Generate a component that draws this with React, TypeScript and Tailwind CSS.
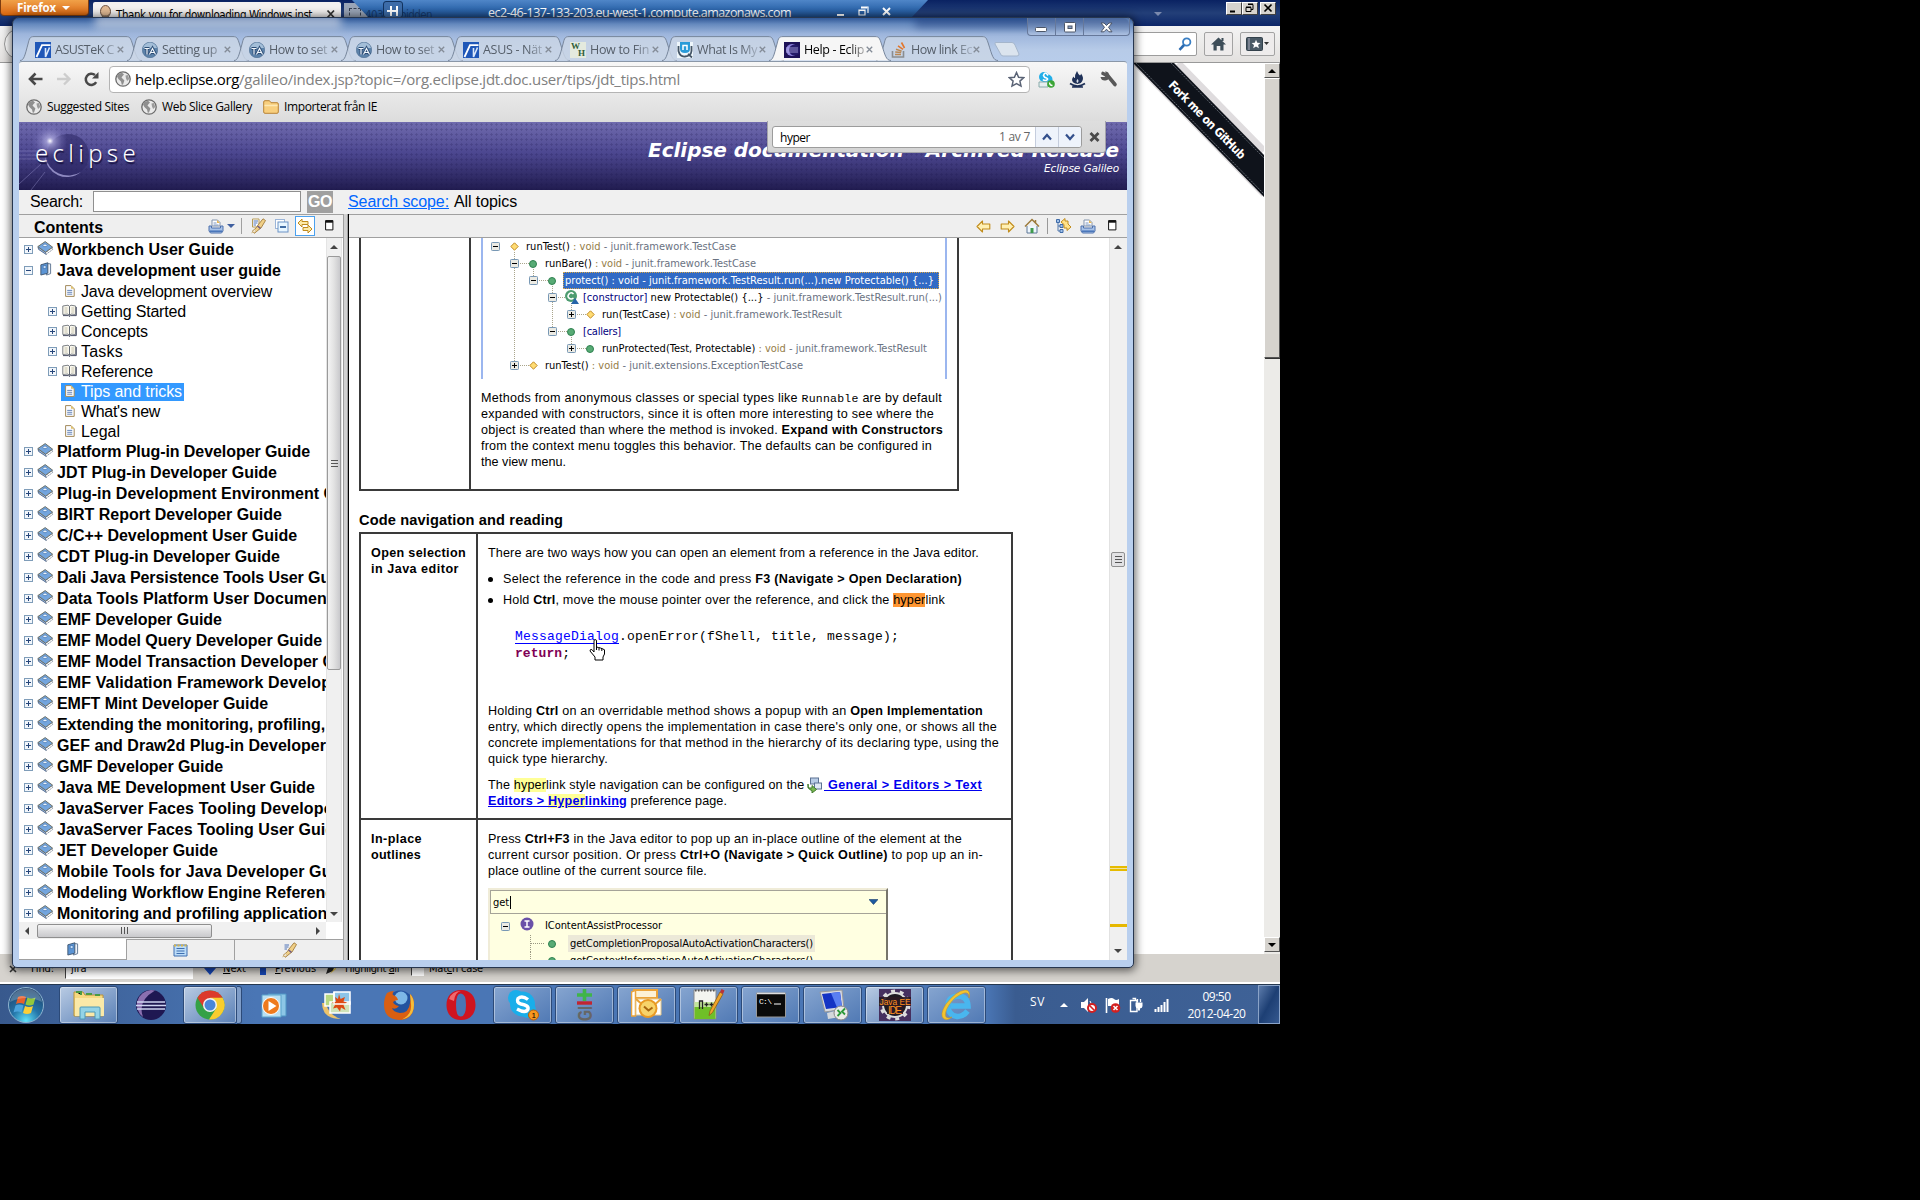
import { useLayoutEffect, useRef } from "react";
import type { ReactNode } from "react";

/* Spreads its text over a given width by adjusting the letter spacing. */
function Fit({ w, className = "", children }: { w: number; className?: string; children: ReactNode }) {
  const ref = useRef<HTMLSpanElement>(null);
  useLayoutEffect(() => {
    const el = ref.current;
    if (!el) return;
    el.style.letterSpacing = "0px";
    const natural = el.getBoundingClientRect().width;
    const n = (el.textContent || "").length || 1;
    el.style.letterSpacing = `${(w - natural) / n}px`;
  }, [w]);
  return (
    <span ref={ref} className={`inline-block shrink-0 whitespace-pre ${className}`}>
      {children}
    </span>
  );
}

const UI = "font-['Open_Sans',sans-serif]";
const ARIAL = "font-['Liberation_Sans',Arial,sans-serif]";
const TAHOMA = "font-['DejaVu_Sans_Condensed','DejaVu_Sans',sans-serif]";

/* ---------- small icons ---------- */

function Globe() {
  return (
    <svg width="16" height="16" viewBox="0 0 16 16" className="shrink-0">
      <circle cx="8" cy="8" r="7.2" fill="#e9e9e9" stroke="#6b6b6b" strokeWidth="1.3" />
      <path d="M3 3 L7 1.8 L9 3.4 L7.6 5 L6.5 6.6 L8 8 L9.4 9.6 L8 13.5 L6.8 13.8 L6 10.5 L3.4 8 L2 5.5Z" fill="#8f8f8f" />
      <path d="M10.5 4.5 L13 4 L14.2 8 L12.2 10 L11 7.6Z" fill="#9b9b9b" />
    </svg>
  );
}

function Book() {
  return (
    <svg width="17" height="14" viewBox="0 0 17 14" className="shrink-0">
      <path d="M1 5.8 L8.6 11.2 L9.2 13.4 L1.6 8.400Z" fill="#9dbde6" stroke="#4d6488" strokeWidth="0.9" />
      <path d="M9.200 13.2 L15.6 8.6 L15.3 6.5 L8.6 11.4Z" fill="#fff" stroke="#6c7788" strokeWidth="0.9" strokeDasharray="1.5 1" />
      <path d="M0.8 5.6 L8.2 0.6 L15.6 6.2 L8.6 11.2Z" fill="#73a5de" stroke="#6f7268" strokeWidth="1" />
      <ellipse cx="8" cy="4.4" rx="2.1" ry="1.3" fill="#eaf3fc" stroke="#3b6eae" strokeWidth="0.7" />
    </svg>
  );
}

function BlueBook({ size = 14 }: { size?: number }) {
  return (
    <svg width={size} height={size + 1} viewBox="0 0 14 15" className="shrink-0">
      <path d="M7 1.5 L12.5 2 L12.5 12.5 L8 14Z" fill="#eef3fa" stroke="#5c7290" />
      <path d="M2 3 L9.5 0.8 L9.5 12 L2 14Z" fill="#5b94d4" stroke="#41566f" />
      <rect x="4.5" y="4" width="3" height="3" fill="#c7e0fb" stroke="#33629c" strokeWidth=".6" />
    </svg>
  );
}

function OpenBook() {
  return (
    <svg width="15" height="13" viewBox="0 0 15 13" className="shrink-0">
      <path d="M0.8 2 L6 1.2 L7.5 2.4 L9 1.2 L13.6 2 L13.6 10.5 L9 10 L7.5 11.8 L6 10 L0.8 10.5Z" fill="#fcfaf0" stroke="#6e7378" strokeWidth=".9" />
      <path d="M7.5 2.4 V11.2" stroke="#5e6570" strokeWidth="1" />
      <path d="M2.5 4h3M2.5 6h3M2.5 8h3" stroke="#b9b49c" strokeWidth="0.8" />
      <path d="M9.3 4h3M9.3 6h3M9.3 8h3" stroke="#b9b49c" strokeWidth="0.8" />
      <path d="M1 11.6h5.5l1 1 1-1h5.8V3" stroke="#4a4f66" fill="none" strokeWidth="1" />
    </svg>
  );
}

function Doc() {
  return (
    <svg width="10" height="12" viewBox="0 0 10 12" className="shrink-0">
      <path d="M0.6 0.6 H6 L9.2 3.8 V11.4 H0.6Z" fill="#fbfcff" stroke="#a38a5c" />
      <path d="M6 0.6 V3.8 H9.2Z" fill="#dfc06b" />
      <path d="M2.2 5.4h5M2.2 7.3h5M2.2 9.2h5" stroke="#5a7ab0" strokeWidth="0.9" />
    </svg>
  );
}

function Toggle({ open }: { open?: boolean }) {
  return (
    <svg width="9" height="9" viewBox="0 0 9 9" className="shrink-0">
      <rect x="0.5" y="0.5" width="8" height="8" fill="#f2f6fb" stroke="#7f9db9" />
      <path d="M2 4.5h5" stroke="#26467a" />
      {!open && <path d="M4.5 2v5" stroke="#26467a" />}
    </svg>
  );
}

function XpToggle({ open }: { open?: boolean }) {
  return (
    <svg width="9" height="9" viewBox="0 0 9 9" className="shrink-0">
      <rect x="0.5" y="0.5" width="8" height="8" rx="0.8" fill="#ecebe4" stroke="#7898b5" />
      <path d="M2 4.5h5" stroke="#000" />
      {!open && <path d="M4.5 2v5" stroke="#000" />}
    </svg>
  );
}

function Dot() {
  return (
    <svg width="8" height="8" viewBox="0 0 8 8" className="shrink-0">
      <circle cx="4" cy="4" r="3.5" fill="#58ab75" stroke="#2f8150" />
    </svg>
  );
}

function Diamond() {
  return (
    <svg width="9" height="9" viewBox="0 0 9 9" className="shrink-0">
      <path d="M4.5 0.8 L8.2 4.5 L4.5 8.2 L0.8 4.5Z" fill="#ffdc73" stroke="#c08a24" />
    </svg>
  );
}

function Printer() {
  return (
    <svg width="16" height="15" viewBox="0 0 16 15" className="shrink-0">
      <path d="M4 7 V1 H9.5 L12 3.5 V7Z" fill="#fff" stroke="#8394ad" />
      <path d="M9 1v3h3z" fill="#e5b75a" />
      <path d="M5.5 4h3M5.5 6h5" stroke="#7d97c2" />
      <path d="M1 7 H3.5 V9 H12.5 V7 H15 V12 L13.5 14 H2.5 L1 12Z" fill="#a9c3e8" stroke="#4d71ad" />
      <path d="M2 12.2h12" stroke="#4673b8" strokeWidth="1.5" />
    </svg>
  );
}

function Torch({ plain }: { plain?: boolean }) {
  return (
    <svg width="17" height="16" viewBox="0 0 17 16" className="shrink-0">
      {!plain && <path d="M2.5 1 H9 V9 H2.5Z" fill="#fff" stroke="#b69b55" />}
      <path d="M3.500 3h4.500M3.500 5h4M3.500 7h2.500" stroke="#4c72b8" />
      <path d="M15.5 2.5 L13 0.8 L8 7 L6.5 9.5 L2 13.5 L4.5 15.2 L9 11.5 L11 10Z" fill="#f0cf86" stroke="#a07c3c" strokeWidth="0.9" />
      <path d="M1.5 14.8 L5 11.5 L6 13.5Z" fill="#fff" stroke="#ccb27a" strokeWidth=".6" />
      <path d="M7.5 8 L10.5 10.4" stroke="#6f5a86" strokeWidth="1.5" />
    </svg>
  );
}

function MaxIcon() {
  return (
    <svg width="9" height="11" viewBox="0 0 9 11" className="shrink-0">
      <path d="M0.6 0.6h7.3v9.3H0.6z" fill="#fff" stroke="#111" />
      <path d="M0.6 1.6 h7.3" stroke="#111" strokeWidth="2.2" />
    </svg>
  );
}

function GoldArrow({ flip }: { flip?: boolean }) {
  return (
    <svg width="15" height="13" viewBox="0 0 15 13" className={flip ? "shrink-0 -scale-x-100" : "shrink-0"}>
      <path d="M1 6.5 L6.5 1 V4 H13.8 V9 H6.5 V12Z" fill="#fff0b3" stroke="#c18c1c" strokeWidth="1.1" strokeLinejoin="round" />
    </svg>
  );
}

function Triangle({ dir, className = "" }: { dir: "up" | "down" | "left" | "right"; className?: string }) {
  const d = { up: "M0 6 L4 2 L8 6Z", down: "M0 2 L4 6 L8 2Z", left: "M6 0 L2 4 L6 8Z", right: "M2 0 L6 4 L2 8Z" }[dir];
  return (
    <svg width="8" height="8" viewBox="0 0 8 8" className={`shrink-0 ${className}`}>
      <path d={d} fill="currentColor" />
    </svg>
  );
}

/* ---------- Firefox window behind ---------- */

function ClassicButton({ children }: { children: ReactNode }) {
  return (
    <div className="flex h-[13px] w-4 items-center justify-center border border-t-white border-l-white border-r-[#404040] border-b-[#404040] bg-[#d6d3ce]">
      <svg width="12" height="11" viewBox="0 0 12 11" stroke="#000" fill="none">
        {children}
      </svg>
    </div>
  );
}

function FirefoxWindow() {
  return (
    <div className="flex h-[984px] w-[1280px] flex-col bg-white">
      <div className="relative flex h-[26px] shrink-0 bg-gradient-to-b from-[#0a2262] via-[#233f78] to-[#0c2568]">
        <div className={`ml-px flex h-[15px] w-[87px] items-center rounded-b-[3px] bg-gradient-to-b from-[#f0a148] to-[#d96608] pl-4 text-[11.5px] font-bold text-white ring-1 ring-[#7c3c10] ${UI}`}>
          <Fit w={39}>Firefox</Fit>
          <Triangle dir="down" className="ml-[6px]" />
        </div>
        <div className={`mt-[2px] ml-[5px] flex h-[24px] w-[248px] items-start rounded-t-[2px] bg-[#f3f1f0] pl-[6px] text-black ${TAHOMA}`}>
          <svg width="13" height="15" viewBox="0 0 13 15" className="mt-[3px]">
            <ellipse cx="6.5" cy="6.5" rx="5" ry="6" fill="#e2bb95" stroke="#6b5040" />
            <path d="M1 13 Q6 8 12 13 V15 H1Z" fill="#555" />
            <path d="M2 8 Q6 14 11 8 L9 12 H4Z" fill="#8a7462" />
          </svg>
          <Fit w={196} className="ml-[4px] mt-[6px] text-[11.5px] leading-[14px]">Thank you for downloading Windows inst</Fit>
          <svg width="10" height="10" viewBox="0 0 10 10" className="mt-[7px] ml-[14px]">
            <path d="M1.5 1.5l6.5 7M8 1.5l-6.5 7" stroke="#333" strokeWidth="1.8" />
          </svg>
        </div>
        <div className="mt-[3px] ml-[3px] h-[23px] w-10 bg-[#9aa5b7]">
          <div className="m-[5px] h-3 w-3 border border-dashed border-gray-700" />
        </div>
        <Triangle dir="down" className="mt-[10px] ml-[770px] text-[#7b8aae]" />
        <div className="absolute top-[2px] right-[4px] flex">
          <ClassicButton><path d="M2 8.5h5" strokeWidth="2" /></ClassicButton>
          <ClassicButton><path d="M4 1.5h5v5H7M2 4.5h5v4H2zM2 4h5M4 1h5" /></ClassicButton>
          <div className="w-[2px]" />
          <ClassicButton><path d="M2.5 1.5l7 7M9.5 1.5l-7 7" strokeWidth="1.7" /></ClassicButton>
        </div>
      </div>
      <div className="flex h-[37px] shrink-0 items-center justify-end border-b border-[#999] bg-gradient-to-b from-[#f4f4f4] to-[#e3e1df] pr-[5px]">
        <div className="mr-auto ml-[4px] h-8 w-8 rounded-full border border-[#999] bg-white" />
        <div className="mr-[7px] flex h-[24px] w-[90px] items-center justify-end rounded-r-[2px] border border-[#9c9c9c] bg-white pr-[4px]">
          <svg width="14" height="14" viewBox="0 0 14 14" fill="none">
            <circle cx="8.7" cy="5" r="3.7" stroke="#3a7fc4" strokeWidth="1.8" />
            <path d="M6 8 L1.5 12.8" stroke="#2a6ab0" strokeWidth="2.6" />
          </svg>
        </div>
        <div className="mr-[7px] flex h-[24px] w-[29px] items-center justify-center rounded-[2px] border border-[#a3a3a3] bg-[#eeecec]">
          <svg width="17" height="14" viewBox="0 0 17 14">
            <path d="M8.5 0.5 L16 7.5 H13.5 V13.5 H10.3 V9 H6.7 V13.5 H3.5 V7.5 H1Z M11.5 1h2v3h-2z" fill="#3d4d58" />
          </svg>
        </div>
        <div className="flex h-[24px] w-[35px] items-center justify-center gap-px rounded-[2px] border border-[#a3a3a3] bg-[#eeecec]">
          <svg width="17" height="15" viewBox="0 0 17 15">
            <rect x="0.5" y="0.5" width="16" height="13" rx="1" fill="#4a5a66" stroke="#33414b" />
            <path d="M3 1v12" stroke="#aab" />
            <path d="M10 2.8l1.3 3 3.2.2-2.4 2 .8 3.2-2.9-1.7-2.8 1.7.8-3.2-2.4-2 3.2-.2z" fill="#fff" />
          </svg>
          <svg width="5" height="4"><path d="M0 0h5L2.500 3z" fill="#333" /></svg>
        </div>
      </div>
      <div className="relative flex h-[891px] shrink-0 justify-end">
        <svg width="132" height="140" viewBox="0 0 132 140" className="absolute top-0 left-[1132px]">
          <path d="M4 0 L132 131 M46 0 L132 88" stroke="#c9c4c8" strokeWidth="7" opacity=".6" fill="none" />
          <path d="M1 0 H42 L132 92 V134Z" fill="#0f131b" />
          <path d="M4 0 L132 131 M39 0 L132 95" stroke="#5c626b" strokeWidth="1" strokeDasharray="2 1" fill="none" />
          <text x="75" y="61" textAnchor="middle" textLength="104" transform="rotate(45.500 75 57)" className="font-['DejaVu_Sans_Condensed']" fontSize="12" fontWeight="700" fill="#fff">
            Fork me on GitHub
          </text>
        </svg>
        <div className="flex w-4 flex-col bg-[#ecebe8] bg-[radial-gradient(#dcdad5_40%,transparent_41%)] bg-[size:2px_2px]">
          <div className="flex h-[15px] items-center justify-center border border-t-white border-l-white border-r-[#555] border-b-[#555] bg-[#d6d3ce]"><Triangle dir="up" /></div>
          <div className="h-[280px] border border-t-white border-l-white border-r-[#555] border-b-[#555] bg-[#d6d3ce] shadow-[1px_1px_0_#333]" />
          <div className="mt-auto mb-[2px] flex h-[15px] items-center justify-center border border-t-white border-l-white border-r-[#555] border-b-[#555] bg-[#d6d3ce]"><Triangle dir="down" /></div>
        </div>
      </div>
      <div className={`flex h-[30px] shrink-0 items-center border-b-[2px] border-white bg-[#d6d3ce] pt-[2px] pl-[9px] text-[11px] text-black ${TAHOMA}`}>
        <svg width="8" height="8" viewBox="0 0 8 8"><path d="M1 1l6 6M7 1L1 7" stroke="#333" strokeWidth="1.600" /></svg>
        <Fit w={23} className="ml-[14px]">Find:</Fit>
        <div className="ml-[11px] flex h-5 w-[128px] items-center border border-t-[#404040] border-l-[#404040] border-white bg-white pl-[5px]">jira</div>
        <svg width="12" height="12" viewBox="0 0 12 12" className="ml-[11px]"><path d="M6 12 L0 5 H3 V0 H9 V5 H12Z" fill="#1748b8" /></svg>
        <Fit w={23} className="ml-[7px]"><u>N</u>ext</Fit>
        <svg width="12" height="12" viewBox="0 0 12 12" className="ml-[11px]"><path d="M6 0 L0 5 H3 V12 H9 V5 H12Z" fill="#1748b8" /></svg>
        <Fit w={41} className="ml-[6px]"><u>P</u>revious</Fit>
        <svg width="12" height="12" viewBox="0 0 12 12" className="ml-[9px]"><path d="M1 11 L3 5 L10 1 L8 8Z" fill="#222" /><path d="M8 7l3-3v2L5 11z" fill="#e5c23d" /></svg>
        <Fit w={54} className="ml-[8px]">Highlight <u>a</u>ll</Fit>
        <div className="ml-[12px] h-[13px] w-[13px] border border-t-[#404040] border-l-[#404040] border-white bg-white" />
        <Fit w={54} className="ml-[5px]">Mat<u>c</u>h case</Fit>
      </div>
    </div>
  );
}

function RemoteBar() {
  return (
    <div className={`absolute top-0 left-[352px] flex h-[18px] w-[576px] items-center bg-gradient-to-b from-[#4f86c8] via-[#2f68ad] to-[#1c4c8c] text-[12.500px] text-white [clip-path:polygon(0_0,100%_0,calc(100%-17px)_100%,17px_100%)] ${UI}`}>
      <span className={`absolute top-[8px] left-[13px] text-[11.500px] leading-[14px] text-[#0c2a55]/70 ${TAHOMA}`}><Fit w={67}>403 Forbidden</Fit></span>
      <div className="relative ml-[31px] flex h-[17px] w-5 items-center justify-center rounded-[3px] border border-[#12335f] bg-[#3d6ca8]">
        <svg width="12" height="10" viewBox="0 0 12 10" className="mt-[4px]"><path d="M0 5h4M4 0v10M4 5h6M10 0v10" stroke="#fff" strokeWidth="2" /></svg>
      </div>
      <Fit w={303} className="ml-[85px] mt-[8px]">ec2-46-137-133-203.eu-west-1.compute.amazonaws.com</Fit>
      <svg width="54" height="12" viewBox="0 0 54 12" fill="none" stroke="#fff" className="ml-[46px] mt-[4px]">
        <path d="M0 10h7" strokeWidth="2" />
        <path d="M24 2h7v6M22 5h6v5h-6zM24 3h6M22 5.500h6" strokeWidth="1.200" />
        <path d="M46 3l7 7M53 3l-7 7" strokeWidth="2" />
      </svg>
    </div>
  );
}

/* ---------- Chrome window ---------- */

function AsusFav() {
  return (
    <svg width="16" height="16" viewBox="0 0 16 16">
      <rect width="16" height="16" fill="#1f57b8" />
      <path d="M1.500 15 L7 3.200 H15.500" stroke="#fff" strokeWidth="1.800" fill="none" />
      <path d="M10.500 6v9L14.500 5.500" stroke="#dbe8fa" strokeWidth="1.600" fill="none" />
    </svg>
  );
}
function TaFav() {
  return (
    <svg width="16" height="16" viewBox="0 0 16 16">
      <circle cx="8" cy="8" r="7.700" fill="#5d83aa" stroke="#48698d" strokeWidth=".6" />
      <path d="M1 6Q3 0.800 8 .6 13 .8 15 6z" fill="#a3bed8" />
      <path d="M2.500 6.500h5M5 6.500v6M7.500 12.500l3-6 3 6M9 10.500h3.500" stroke="#2c4c74" strokeWidth="3" fill="none" />
      <path d="M2.500 6.500h5M5 6.500v6M7.500 12.500l3-6 3 6M9 10.500h3.500" stroke="#f0f6fc" strokeWidth="1.200" fill="none" />
    </svg>
  );
}
function WhFav() {
  return (
    <div className="relative h-4 w-4 bg-[#e4eade] font-['Liberation_Serif',serif] text-[9px] leading-[8px] font-bold text-[#2f5d3a]">
      <span className="absolute top-0 left-px">W</span>
      <span className="absolute top-[7px] left-[8px]">H</span>
    </div>
  );
}
function UFav() {
  return (
    <svg width="16" height="16" viewBox="0 0 16 16">
      <rect width="16" height="16" fill="#eef6fb" />
      <path d="M1.500 4 V9 Q3 15 8 14.500 Q14 14 14.500 9 V4M11 12l4 3.500" stroke="#456" strokeWidth="1.800" fill="none" />
      <path d="M3 0h10v7q0 4-5 4T3 7z" fill="#2a9bd8" />
      <path d="M6 8V3.500h4V8" stroke="#fff" strokeWidth="1.500" fill="none" />
    </svg>
  );
}
function EclipseFav() {
  return (
    <svg width="16" height="16" viewBox="0 0 16 16">
      <rect width="16" height="16" fill="#1d1257" />
      <circle cx="8" cy="8" r="6" fill="#8f84dd" />
      <circle cx="10.500" cy="8" r="5.500" fill="#241a68" />
      <path d="M2 6h12M2 8h12M2 10h12" stroke="#b8b2ea" strokeWidth=".8" />
    </svg>
  );
}
function SoFav() {
  return (
    <svg width="16" height="16" viewBox="0 0 16 16" fill="none">
      <path d="M1.500 9v6h11V9" stroke="#8a8d90" strokeWidth="1.600" />
      <path d="M4 12.500h6M4.200 10l6 .6M5 7.200l5.700 1.900" stroke="#b98855" strokeWidth="1.500" />
      <path d="M7 3.800l5 3.500M10.500 .5l3 5.500" stroke="#e2762c" strokeWidth="1.600" />
    </svg>
  );
}

const TABS: { title: string; w: number; icon: ReactNode; active?: boolean }[] = [
  { title: "ASUSTeK C", w: 59, icon: <AsusFav /> },
  { title: "Setting up", w: 55, icon: <TaFav /> },
  { title: "How to set", w: 58, icon: <TaFav /> },
  { title: "How to set", w: 58, icon: <TaFav /> },
  { title: "ASUS - Nät", w: 59, icon: <AsusFav /> },
  { title: "How to Fin", w: 59, icon: <WhFav /> },
  { title: "What Is My", w: 60, icon: <UFav /> },
  { title: "Help - Eclip", w: 60, icon: <EclipseFav />, active: true },
  { title: "How link Ec", w: 61, icon: <SoFav /> },
];

function TabStrip() {
  return (
    <div className="flex h-[25px] items-end pl-px">
      {TABS.map((t, i) => (
        <div key={i} className={`relative flex h-[25px] w-[107px] shrink-0 items-center pt-[2px] pl-[15px] ${t.active ? "z-10" : ""}`}>
          <svg width="123" height="25" viewBox="0 0 123 25" className="absolute top-0 left-0">
            <path
              d="M0 24.500 C4 24.500 5 19 8 8 C9.500 2 10 0.600 14 0.600 H106 C110 0.600 110.500 2 112.500 8 C116 19 117 24.500 122 24.500"
              fill={t.active ? "#f6f6f6" : "#c9d5e5"}
              fillOpacity={t.active ? 1 : 0.85}
              stroke="#77869c"
              strokeWidth="1"
            />
          </svg>
          <div className="relative h-4 w-4 shrink-0">{t.icon}</div>
          <div className={`relative ml-[4px] w-[61px] shrink-0 overflow-hidden text-[12.500px] leading-4 [mask-image:linear-gradient(to_right,#000_72%,rgba(0,0,0,.25))] ${t.active ? "text-black" : "text-[#555e69]"}`}>
            <Fit w={t.w}>{t.title}</Fit>
          </div>
          <svg width="7" height="7" viewBox="0 0 7 7" className="relative ml-px shrink-0">
            <path d="M0.700 0.700l5.500 5.500M6.200 0.700L0.700 6.200" stroke="#848c97" strokeWidth="1.300" />
          </svg>
        </div>
      ))}
      <svg width="26" height="16" viewBox="0 0 26 16" className="mb-[4px] ml-[11px]">
        <path d="M2 1.500 H18 Q20 1.500 21 4 L25 13 Q25 15 23 15 H9 Q7 15 6 12 L1 3 Q0.500 1.500 2 1.500Z" fill="#dbe4ee" stroke="#a5b6cc" />
      </svg>
    </div>
  );
}

function ChromeHeader() {
  return (
    <div className={`relative ${UI}`}>
      <div className="flex h-[18px] items-start justify-end">
        <div className="mr-[-3px] flex h-[18px] w-[103px] rounded-b-[4px] border border-t-0 border-[#66789a] bg-white/15">
          <div className="flex w-[28px] items-center justify-center border-r border-[#66789a] pt-[5px]">
            <svg width="13" height="5"><rect x=".5" y=".5" width="11" height="4" rx="1" fill="#fff" stroke="#4c5668" /></svg>
          </div>
          <div className="flex w-[28px] items-center justify-center border-r border-[#66789a] pt-[1px]">
            <svg width="12" height="11" viewBox="0 0 12 11"><rect x=".5" y=".5" width="11" height="9.500" rx="1" fill="#fff" stroke="#4c5668" /><rect x="4" y="4" width="4" height="2.500" fill="#8aa3c9" stroke="#4c5668" /></svg>
          </div>
          <div className="flex flex-1 items-center justify-center pt-[1px]">
            <svg width="13" height="11" viewBox="0 0 13 11"><path d="M1 1h3l2.500 2.500L9 1h3L8.500 5.300 12 9.800H9L6.500 7.200 4 9.800H1l3.500-4.500z" fill="#fff" stroke="#4c5668" /></svg>
          </div>
        </div>
      </div>
      <TabStrip />
      <div className="h-[61px] rounded-t-[3px] border-t border-[#8a97a8] bg-gradient-to-b from-[#f7f7f7] to-[#dcdcdc]">
        <div className="flex h-[34px] items-center pl-[9px]">
          <svg width="16" height="14" viewBox="0 0 16 14" fill="none"><path d="M14.500 7H3M7.500 1.500L2 7l5.500 5.500" stroke="#484848" strokeWidth="2.600" /></svg>
          <svg width="16" height="14" viewBox="0 0 16 14" fill="none" className="ml-[12px]"><path d="M1 7h12M8 1.500L13.500 7 8 12.500" stroke="#cdcdcd" strokeWidth="2.400" /></svg>
          <svg width="17" height="16" viewBox="0 0 17 16" fill="none" className="ml-[11px]"><path d="M13.200 11.200 A5.600 5.600 0 1 1 12 4" stroke="#484848" strokeWidth="2.500" /><path d="M15.500 1V7.500H9z" fill="#484848" /></svg>
          <div className="ml-[9px] flex h-[27px] w-[921px] items-center rounded-[4px] border border-[#b4b4b4] bg-white pl-[5px]">
            <Globe />
            <span className="ml-[4px] text-[15px] leading-5 text-black"><Fit w={104}>help.eclipse.org</Fit></span>
            <span className="text-[15px] leading-5 text-[#808080]"><Fit w={441}>/galileo/index.jsp?topic=/org.eclipse.jdt.doc.user/tips/jdt_tips.html</Fit></span>
            <svg width="17" height="17" viewBox="0 0 17 17" className="mr-[4px] ml-auto">
              <path d="M8.500 1.500l2.100 4.700 5 .5-3.700 3.400 1.100 5-4.500-2.600L4 15.100l1.100-5L1.400 6.700l5-.5z" fill="#fff" stroke="#5a6375" strokeWidth="1.500" />
            </svg>
          </div>
          <svg width="17" height="17" viewBox="0 0 17 17" className="ml-[8px]">
            <circle cx="6" cy="6" r="5" fill="#22aee8" /><circle cx="9.500" cy="8.500" r="5" fill="#22aee8" />
            <path d="M10 4.500Q7-.5 5.500 4.500 6 6.500 8.500 7q2.500 1-.5 2.500-2 .3-3-1" stroke="#fff" strokeWidth="1.600" fill="none" />
            <path d="M1 11h9v5H1z" fill="#e6eef0" stroke="#8aa" /><circle cx="13" cy="13" r="3.800" fill="#3ba535" /><path d="M11.500 11.500q0 3 3 3" stroke="#fff" fill="none" strokeWidth="1.300" />
          </svg>
          <svg width="17" height="17" viewBox="0 0 17 17" className="ml-[14px]">
            <path d="M8 0q1 3 3 4.500 1-.5 1-2 3 4 1.500 7-1 3-5 3.500-5-.5-5.500-4 0-2 1.500-3.500.500 1.500 1.500 1.500Q5.500 4 8 0z" fill="#1f3158" />
            <path d="M1 12.500q7.500 5 15 0M3 16h11" stroke="#1f3158" strokeWidth="1.700" fill="none" />
            <path d="M8.500 8q2 2 0 4-2-1.500 0-4z" fill="#d9dfea" />
          </svg>
          <svg width="19" height="18" viewBox="0 0 19 18" className="ml-[13px]">
            <path d="M4 3.500 L9 6 L16 14.500" stroke="#585858" strokeWidth="3.600" strokeLinecap="round" />
            <path d="M6 1.500 A4.500 4.500 0 1 1 1.500 7 L5.500 7 L7.500 5z" fill="#585858" />
          </svg>
        </div>
        <div className="mt-[2px] flex h-[18px] items-center pl-[7px] text-[12px] text-black">
          <Globe />
          <Fit w={82} className="ml-[5px]">Suggested Sites</Fit>
          <span className="ml-[12px] flex"><Globe /></span>
          <Fit w={90} className="ml-[5px]">Web Slice Gallery</Fit>
          <svg width="16" height="14" viewBox="0 0 16 14" className="ml-[11px]">
            <path d="M0.700 2q0-1.300 1.300-1.300h4.500l1.500 2h6q1.300 0 1.300 1.300v8q0 1.300-1.300 1.300H2Q.7 13.300.7 12z" fill="#f8cf7e" stroke="#b98436" />
            <path d="M1.500 5.500h13" stroke="#fde8b4" strokeWidth="1.500" />
          </svg>
          <Fit w={93} className="ml-[5px]">Importerat från IE</Fit>
        </div>
      </div>
    </div>
  );
}

function Banner() {
  return (
    <div className="relative flex h-[68px] shrink-0 items-center justify-between overflow-hidden bg-[#433d82] bg-[radial-gradient(rgba(20,15,70,.2)_28%,transparent_30%),linear-gradient(to_bottom,#706bae,#4c4790_45%,#211c50)] bg-[size:5px_5px,100%_100%]">
      <svg width="140" height="68" viewBox="0 0 140 68" className="absolute top-0 left-0">
        <defs>
          <radialGradient id="flare"><stop offset="0" stopColor="#fff" /><stop offset=".2" stopColor="#b9b5e8" stopOpacity=".7" /><stop offset="1" stopColor="#6e68b8" stopOpacity="0" /></radialGradient>
        </defs>
        <circle cx="49" cy="33" r="21" fill="#2f2968" opacity=".6" />
        <path d="M26 34 A22 22 0 0 0 62 50 A24 24 0 0 1 26 34" fill="#a7a2d8" opacity=".8" />
        <circle cx="31" cy="19" r="18" fill="url(#flare)" />
        <path d="M0 29h28M0 33h28M0 37h28M0 62 L22 42M12 68 L26 50" stroke="#9a95d0" opacity=".4" />
      </svg>
      <span className="relative mt-[-7px] ml-[16px] font-['Noto_Sans',sans-serif] text-[24px] font-light text-white [text-shadow:1px_2px_1px_#17123f]">
        <Fit w={105}>eclipse</Fit>
      </span>
      <div className="relative mr-[8px] text-right font-['DejaVu_Sans',Verdana,sans-serif] text-white italic">
        <div className="text-[20px] leading-[24px] font-bold"><Fit w={471}>Eclipse documentation - Archived Release</Fit></div>
        <div className="text-[10.500px] leading-[12px]"><Fit w={75}>Eclipse Galileo</Fit></div>
      </div>
    </div>
  );
}

function FindBar() {
  return (
    <div className={`absolute top-[103px] left-[754px] flex h-[32px] w-[339px] items-center rounded-b-[3px] border border-t-0 border-[#a3a3ab] bg-gradient-to-b from-[#dedede] to-[#d4d4d4] pl-[4px] text-[12px] text-black ${UI}`}>
      <div className="mt-[1px] flex h-[22px] w-[310px] items-center rounded-[3px] border border-[#9c9c9c] bg-white pl-[7px]">
        <Fit w={30} className="mt-px">hyper</Fit>
        <Fit w={31} className="ml-auto text-[#666]">1 av 7</Fit>
        <div className="ml-[5px] flex h-full w-[23px] items-center justify-center border-l border-[#c5cddd] bg-[#eef3fb]">
          <svg width="10" height="8" viewBox="0 0 10 8" fill="none"><path d="M1 6.500L5 2l4 4.500" stroke="#34508c" strokeWidth="2.200" /></svg>
        </div>
        <div className="flex h-full w-[23px] items-center justify-center rounded-r-[3px] border-l border-[#c5cddd] bg-[#eef3fb]">
          <svg width="10" height="8" viewBox="0 0 10 8" fill="none"><path d="M1 1.500L5 6l4-4.500" stroke="#34508c" strokeWidth="2.200" /></svg>
        </div>
      </div>
      <svg width="11" height="10" viewBox="0 0 11 10" className="ml-[7px]"><path d="M1.500 1l8 8M9.500 1l-8 8" stroke="#4a4a4a" strokeWidth="2.800" /></svg>
    </div>
  );
}

function SearchRow() {
  return (
    <div className={`flex h-[24px] shrink-0 items-start bg-[#f0f0f0] pt-px pl-[11px] text-[16px] leading-[22px] text-black ${ARIAL}`}>
      <Fit w={53}>Search:</Fit>
      <div className="ml-[10px] h-[21px] w-[208px] border border-[#8f8f8f] bg-white" />
      <div className="ml-[6px] h-[22px] w-[26px] bg-[#a0a0a0] text-center font-bold text-white"><Fit w={24}>GO</Fit></div>
      <Fit w={101} className="ml-[15px] text-[#0066ff] underline">Search scope:</Fit>
      <Fit w={63} className="ml-[5px]">All topics</Fit>
    </div>
  );
}

type Node = { t: string; w?: number; kind: "book" | "openroot" | "doc" | "topic"; sel?: boolean };
const TREE: Node[] = [
  { t: "Workbench User Guide", w: 177, kind: "book" },
  { t: "Java development user guide", w: 224, kind: "openroot" },
  { t: "Java development overview", w: 191, kind: "doc" },
  { t: "Getting Started", w: 105, kind: "topic" },
  { t: "Concepts", w: 67, kind: "topic" },
  { t: "Tasks", w: 42, kind: "topic" },
  { t: "Reference", w: 72, kind: "topic" },
  { t: "Tips and tricks", w: 101, kind: "doc", sel: true },
  { t: "What's new", w: 79, kind: "doc" },
  { t: "Legal", w: 39, kind: "doc" },
  { t: "Platform Plug-in Developer Guide", w: 253, kind: "book" },
  { t: "JDT Plug-in Developer Guide", w: 220, kind: "book" },
  { t: "Plug-in Development Environment Guide", w: 312, kind: "book" },
  { t: "BIRT Report Developer Guide", w: 225, kind: "book" },
  { t: "C/C++ Development User Guide", w: 240, kind: "book" },
  { t: "CDT Plug-in Developer Guide", w: 223, kind: "book" },
  { t: "Dali Java Persistence Tools User Guide", w: 296, kind: "book" },
  { t: "Data Tools Platform User Documentation", w: 314, kind: "book" },
  { t: "EMF Developer Guide", w: 165, kind: "book" },
  { t: "EMF Model Query Developer Guide", w: 265, kind: "book" },
  { t: "EMF Model Transaction Developer Guide", w: 311, kind: "book" },
  { t: "EMF Validation Framework Developer Guide", w: 340, kind: "book" },
  { t: "EMFT Mint Developer Guide", w: 211, kind: "book" },
  { t: "Extending the monitoring, profiling,", w: 268, kind: "book" },
  { t: "GEF and Draw2d Plug-in Developer", w: 269, kind: "book" },
  { t: "GMF Developer Guide", w: 166, kind: "book" },
  { t: "Java ME Development User Guide", w: 258, kind: "book" },
  { t: "JavaServer Faces Tooling Developer", w: 282, kind: "book" },
  { t: "JavaServer Faces Tooling User Guide", w: 287, kind: "book" },
  { t: "JET Developer Guide", w: 161, kind: "book" },
  { t: "Mobile Tools for Java Developer Guide", w: 298, kind: "book" },
  { t: "Modeling Workflow Engine Reference", w: 286, kind: "book" },
  { t: "Monitoring and profiling applications", w: 279, kind: "book" },
];

function TreeRow({ n }: { n: Node }) {
  if (n.kind === "book" || n.kind === "openroot")
    return (
      <div className="flex h-[21px] shrink-0 items-center pl-[5px] font-bold">
        <Toggle open={n.kind === "openroot"} />
        <div className="ml-[4px] flex w-[20px] shrink-0 pb-[3px]">{n.kind === "book" ? <Book /> : <span className="ml-[2px]"><BlueBook size={13} /></span>}</div>
        <Fit w={n.w || 0} className="pt-px">{n.t}</Fit>
      </div>
    );
  return (
    <div className="flex h-[20px] shrink-0 items-center pt-px pl-[29px]">
      {n.kind === "topic" ? <Toggle /> : <span className="w-[9px]" />}
      <div className={`ml-[4px] flex h-[18px] items-center ${n.sel ? "bg-[#3399ff] pr-[2px] text-white" : ""}`}>
        <div className="flex w-[20px] pb-[2px]">{n.kind === "topic" ? <span className="ml-px"><OpenBook /></span> : <span className="ml-[4px]"><Doc /></span>}</div>
        <Fit w={n.w || 0} className="pt-px">{n.t}</Fit>
      </div>
    </div>
  );
}

function LeftPanel() {
  return (
    <div className="flex w-[324px] shrink-0 flex-col bg-white">
      <div className="flex h-[24px] shrink-0 items-center border-y border-[#a0a0a0] bg-[#efefef] pl-[15px] text-[16px] font-bold">
        <Fit w={69} className="pt-[3px]">Contents</Fit>
        <span className="ml-[105px]"><Printer /></span>
        <Triangle dir="down" className="ml-[3px] text-[#3f5f9f]" />
        <div className="ml-[6px] h-4 w-px bg-[#a0a0a0]" />
        <span className="ml-[8px]"><Torch /></span>
        <svg width="14" height="14" viewBox="0 0 14 14" className="ml-[8px]">
          <rect x=".5" y=".5" width="9" height="9" fill="#fff" stroke="#9bb5d8" />
          <rect x="3" y="3" width="10" height="10" fill="#e8f6ff" stroke="#6d93c6" /><path d="M5 8h6" stroke="#174a8c" strokeWidth="1.600" />
        </svg>
        <div className="ml-[6px] flex h-[20px] w-[20px] items-center justify-center border border-[#4aa1ef] bg-white">
          <svg width="16" height="16" viewBox="0 0 16 16"><path d="M1 5L5 1v2.500h6v3H5V9zM15 11l-4-4v2.500H6v3h5V15z" fill="#fdeaa8" stroke="#c08a1c" /></svg>
        </div>
        <span className="ml-[10px] pb-[1px]"><MaxIcon /></span>
      </div>
      <div className="flex h-[684px] shrink-0">
        <div className={`flex w-[307px] shrink-0 flex-col overflow-hidden pt-px text-[16px] leading-[18px] whitespace-nowrap text-black ${ARIAL}`}>
          {TREE.map((n, i) => <TreeRow key={i} n={n} />)}
        </div>
        <div className="flex w-[16px] flex-col items-center border-x border-[#e4e4e4] bg-[#f0f0f0] text-[#444]">
          <Triangle dir="up" className="mt-[5px]" />
          <div className="mt-[5px] flex h-[414px] w-[14px] flex-col items-center justify-center gap-[2px] rounded-[2px] border border-[#9a9a9a] bg-gradient-to-r from-[#f4f4f4] via-[#e2e2e2] to-[#c9c9cc]">
            <div className="h-px w-[7px] bg-[#555]" /><div className="h-px w-[7px] bg-[#555]" /><div className="h-px w-[7px] bg-[#555]" />
          </div>
          <Triangle dir="down" className="mt-auto mb-[4px]" />
        </div>
      </div>
      <div className="flex h-[17px] w-[307px] shrink-0 items-center bg-[#f0f0f0] text-[#444]">
        <Triangle dir="left" className="ml-[4px]" />
        <div className="ml-[6px] flex h-[14px] w-[175px] items-center justify-center gap-[2px] rounded-[2px] border border-[#8f8f8f] bg-gradient-to-b from-[#f4f4f4] via-[#dcdcde] to-[#c9c9cc]">
          <div className="h-[7px] w-px bg-[#555]" /><div className="h-[7px] w-px bg-[#555]" /><div className="h-[7px] w-px bg-[#555]" />
        </div>
        <Triangle dir="right" className="mr-[4px] ml-auto" />
      </div>
      <div className="flex h-[21px] shrink-0 bg-[#efefef]">
        <div className="flex w-[107px] items-center justify-center border-b border-[#a0a0a0] bg-white"><BlueBook size={13} /></div>
        <div className="flex w-[108px] items-center justify-center border-t border-l border-[#a0a0a0]">
          <svg width="15" height="14" viewBox="0 0 15 14"><path d="M1 2h13v11H1z" fill="#bcdcf8" stroke="#3e6fb0" /><path d="M1 2.500h13" stroke="#d9b64a" strokeWidth="2" strokeDasharray="2 1.500" /><path d="M3.500 5.500h8M3.500 8h8M3.500 10.500h8" stroke="#3e6fb0" /></svg>
        </div>
        <div className="flex flex-1 items-center justify-center border-t border-l border-[#a0a0a0]"><Torch plain /></div>
      </div>
    </div>
  );
}

/* ---------- document ---------- */

function V({ fn, cls }: { fn: string; cls: string }) {
  return (
    <>
      {fn} <span className="text-[#957d47]">: void</span> <span className="text-gray-500">- {cls}</span>
    </>
  );
}

const CALLS: { depth: number; open?: boolean; icon: "dot" | "diamond" | "ctor"; w: number; sel?: boolean; body: ReactNode }[] = [
  { depth: 0, open: true, icon: "diamond", w: 210, body: <V fn="runTest()" cls="junit.framework.TestCase" /> },
  { depth: 1, open: true, icon: "dot", w: 211, body: <V fn="runBare()" cls="junit.framework.TestCase" /> },
  { depth: 2, open: true, icon: "dot", w: 369, sel: true, body: "protect() : void - junit.framework.TestResult.run(...).new Protectable() {...}" },
  { depth: 3, open: true, icon: "ctor", w: 359, body: <><span className="text-[#000080]">[constructor]</span> new Protectable() {"{...}"} <span className="text-gray-500">- junit.framework.TestResult.run(...)</span></> },
  { depth: 4, icon: "diamond", w: 240, body: <V fn="run(TestCase)" cls="junit.framework.TestResult" /> },
  { depth: 3, open: true, icon: "dot", w: 38, body: <span className="text-[#000080]">[callers]</span> },
  { depth: 4, icon: "dot", w: 325, body: <V fn="runProtected(Test, Protectable)" cls="junit.framework.TestResult" /> },
  { depth: 1, icon: "diamond", w: 258, body: <V fn="runTest()" cls="junit.extensions.ExceptionTestCase" /> },
];

function CallTree() {
  return (
    <div className={`relative h-[141px] w-[466px] border-x-2 border-[#9bb6ef] text-[11px] leading-[17px] text-black ${TAHOMA}`}>
      <svg width="110" height="141" className="absolute top-0 left-0" stroke="#a9a58c" strokeDasharray="1 1" fill="none">
        <path d="M31.500 14V127M50.500 31v9M69.500 48v45M88.500 65v8M88.500 99v9M31 25.500h17M50 42.500h16M69 59.500h16M88 76.500h16M69 93.500h16M88 110.500h16M31 127.500h16" />
      </svg>
      {CALLS.map((c, i) => (
        <div key={i} className="relative flex h-[17px] items-center">
          <svg width={8 + c.depth * 19} height="1" className="shrink-0" />
          <XpToggle open={c.open} />
          <span className={`flex w-[26px] shrink-0 ${c.icon === "ctor" ? "pl-[7px]" : "pl-[10px]"}`}>
            {c.icon === "dot" && <Dot />}
            {c.icon === "diamond" && <Diamond />}
            {c.icon === "ctor" && (
              <svg width="16" height="16" viewBox="0 0 16 16" className="-mt-[2px]"><circle cx="7" cy="7" r="6" fill="#4d9c70" /><path d="M9.500 5Q7 2.500 5 5t0 4q2 2 4.500 0" stroke="#fff" strokeWidth="1.600" fill="none" /><path d="M7 15l4-6 4 6z" fill="#2765a8" /></svg>
            )}
          </span>
          {c.sel ? (
            <span className="-ml-[1px] h-[17px] w-[376px] border border-dotted border-[#d9a545] bg-[#316ac5] pl-px leading-[15px] text-white"><Fit w={c.w}>{c.body}</Fit></span>
          ) : (
            <Fit w={c.w}>{c.body}</Fit>
          )}
        </div>
      ))}
    </div>
  );
}

function L({ w, children }: { w: number; children: ReactNode }) {
  return (
    <div className="h-4">
      <Fit w={w}>{children}</Fit>
    </div>
  );
}

function CodeSample() {
  return (
    <div className="relative mt-[20px] ml-[27px] h-[73px] font-['Liberation_Mono',monospace] text-[13px] leading-[17px] text-black">
      <div><Fit w={384}><span className="text-[#0000ff] underline underline-offset-[3px]">MessageDialog</span>.openError(fShell, title, message);</Fit></div>
      <div><Fit w={55}><b className="text-[#7f0055]">return</b>;</Fit></div>
      <svg width="17" height="22" viewBox="0 0 17 22" className="absolute top-[11px] left-[74px]">
        <path d="M5 13V2q0-1.500 1.200-1.500T7.500 2v6l2 .5 2 .5 2 .8 2 1V15l-1.500 3v3h-8v-3L1 12q0-2 1.800-1.500z" fill="#fff" stroke="#000" />
        <path d="M7.500 8v3M10 8.500v3M12.800 9v3" stroke="#000" />
      </svg>
    </div>
  );
}

function Outline() {
  return (
    <div className={`h-[80px] w-[400px] overflow-hidden border-2 border-b-0 border-[#f0ecd8] border-r-[#77756b] bg-[#ffffe1] text-[11px] text-black ${TAHOMA}`}>
      <div className="flex h-[24px] items-center border-t border-l border-b border-[#a5a398] pl-[2px]">
        <Fit w={16} className="leading-[13px]">get</Fit>
        <div className="ml-px h-[13px] w-px bg-black" />
        <svg width="9" height="6" viewBox="0 0 9 6" className="mr-[8px] ml-auto"><path d="M0 .5h9L4.500 5.500z" fill="#1e5aa0" stroke="#173c6b" strokeWidth=".6" /></svg>
      </div>
      <div className="flex h-[21px] items-center pt-[3px] pl-[11px]">
        <XpToggle open />
        <svg width="14" height="14" viewBox="0 0 14 14" className="mb-[4px] ml-[10px]"><circle cx="7" cy="7" r="6.500" fill="#6a51a8" /><path d="M4.500 4h5M4.500 10h5M7 4v6" stroke="#fff" strokeWidth="1.500" /></svg>
        <Fit w={117} className="ml-[11px]">IContentAssistProcessor</Fit>
      </div>
      {["getCompletionProposalAutoActivationCharacters()", "getContextInformationAutoActivationCharacters()"].map((t, i) => (
        <div key={i} className="flex h-[17px] items-center pl-[40px]">
          <div className="h-full w-[14px] border-l border-dotted border-[#9a9882]"><div className="mt-[8px] border-t border-dotted border-[#9a9882]" /></div>
          <span className="ml-[4px]"><Dot /></span>
          <span className={`ml-[12px] flex h-[17px] items-center px-[2px] ${i === 0 ? "bg-[#ece9d8]" : ""}`}><Fit w={243}>{t}</Fit></span>
        </div>
      ))}
    </div>
  );
}

const CELL = "border-[#3a3a3a]";

function Document() {
  return (
    <div className={`h-[722px] w-[760px] overflow-hidden bg-white pl-[10px] text-[12.600px] leading-4 text-black ${ARIAL}`}>
      <div className={`flex h-[253px] w-[600px] border-x-2 border-b-2 ${CELL}`}>
        <div className={`w-[110px] shrink-0 border-r-2 ${CELL}`} />
        <div className="pl-[10px]">
          <CallTree />
          <div className="mt-[11px]">
            <L w={461}>Methods from anonymous classes or special types like <span className="font-['Liberation_Mono',monospace] text-[11.500px]">Runnable</span> are by default</L>
            <L w={453}>expanded with constructors, since it is often more interesting to see where the</L>
            <L w={462}>object is created than where the method is invoked. <b>Expand with Constructors</b></L>
            <L w={451}>from the context menu toggles this behavior. The defaults can be configured in</L>
            <L w={85}>the view menu.</L>
          </div>
        </div>
      </div>
      <div className="mt-[21px] h-[20px] text-[14.600px] leading-[17px] font-bold"><Fit w={204}>Code navigation and reading</Fit></div>
      <div className={`w-[654px] border-2 ${CELL}`}>
        <div className={`flex h-[286px] border-b-2 ${CELL}`}>
          <div className={`w-[117px] shrink-0 border-r-2 pt-[11px] pl-[10px] font-bold ${CELL}`}>
            <L w={95}>Open selection</L>
            <L w={88}>in Java editor</L>
          </div>
          <div className="pt-[11px] pl-[10px]">
            <L w={491}>There are two ways how you can open an element from a reference in the Java editor.</L>
            <div className="mt-[10px] flex items-center">
              <div className="h-[5px] w-[5px] rounded-full bg-black" />
              <div className="ml-[10px]"><L w={459}>Select the reference in the code and press <b>F3 (Navigate &gt; Open Declaration)</b></L></div>
            </div>
            <div className="mt-[5px] flex items-center">
              <div className="h-[5px] w-[5px] rounded-full bg-black" />
              <div className="ml-[10px]"><L w={442}>Hold <b>Ctrl</b>, move the mouse pointer over the reference, and click the <span className="bg-[#ff9632]">hyper</span>link</L></div>
            </div>
            <CodeSample />
            <div className="mt-[2px]">
              <L w={495}>Holding <b>Ctrl</b> on an overridable method shows a popup with an <b>Open Implementation</b></L>
              <L w={509}>entry, which directly opens the implementation in case there's only one, or shows all the</L>
              <L w={511}>concrete implementations for that method in the hierarchy of its declaring type, using the</L>
              <L w={120}>quick type hierarchy.</L>
            </div>
            <div className="mt-[10px] flex h-4">
              <Fit w={320}>The <span className="bg-[#ffff96]">hyper</span>link style navigation can be configured on the </Fit>
              <svg width="16" height="16" viewBox="0 0 16 16" className="mr-[1px] -ml-[1px] shrink-0"><rect x="3.500" y="1" width="8" height="6" fill="#b9cce6" stroke="#5c7293" /><rect x="7.500" y="6" width="7" height="6" fill="#dfe8f4" stroke="#5c7293" /><path d="M1 7v4h4V8.500l4.500 4L5 16v-2.500Q1 13 1 7z" fill="#7cb851" stroke="#3f7c2d" /></svg>
              <Fit w={158} className="font-bold text-[#0000ee] underline"> General &gt; Editors &gt; Text</Fit>
            </div>
            <div className="flex h-4">
              <Fit w={139} className="font-bold text-[#0000ee] underline">Editors &gt; <span className="bg-[#ffff96]">Hyper</span>linking</Fit>
              <Fit w={100}> preference page.</Fit>
            </div>
          </div>
        </div>
        <div className="flex h-[200px]">
          <div className={`w-[117px] shrink-0 border-r-2 pt-[11px] pl-[10px] font-bold ${CELL}`}>
            <L w={51}>In-place</L>
            <L w={50}>outlines</L>
          </div>
          <div className="pt-[11px] pl-[10px]">
            <L w={474}>Press <b>Ctrl+F3</b> in the Java editor to pop up an in-place outline of the element at the</L>
            <L w={495}>current cursor position. Or press <b>Ctrl+O (Navigate &gt; Quick Outline)</b> to pop up an in-</L>
            <L w={219}>place outline of the current source file.</L>
            <div className="mt-[9px]"><Outline /></div>
          </div>
        </div>
      </div>
    </div>
  );
}

function RightPanel() {
  return (
    <div className="flex w-[779px] flex-col border-l border-[#000] bg-white">
      <div className="flex h-[24px] shrink-0 items-center justify-end border-y border-[#a0a0a0] bg-[#efefef] pr-[10px]">
        <GoldArrow />
        <span className="ml-[9px] flex"><GoldArrow flip /></span>
        <svg width="16" height="16" viewBox="0 0 16 16" className="ml-[9px]"><path d="M3 8v7h10V8" fill="#eef6fd" stroke="#5d7796" /><path d="M1 8.500L8 1.500l7 7M11.500 2v3" stroke="#9c7a3c" strokeWidth="1.500" fill="none" /><path d="M6.500 10h3v5h-3z" fill="#3f9a4d" /></svg>
        <div className="ml-[7px] h-4 w-px bg-[#999]" />
        <svg width="16" height="16" viewBox="0 0 16 16" className="ml-[8px]"><path d="M2 2v11h3M2 8h3" stroke="#5278ad" fill="none" /><path d="M.5 1.500h3v3h-3zM4 6.500h3v3H4zM4 11.500h3v3H4z" fill="#9fc0e8" stroke="#3f6ba8" /><path d="M5 4l4-3.500V3h3v3l3 3-4 3.500V10H8V6.500z" fill="#ffe28a" stroke="#c18c1c" /></svg>
        <span className="ml-[8px]"><Printer /></span>
        <span className="ml-[12px] pb-[1px]"><MaxIcon /></span>
      </div>
      <div className="flex">
        <Document />
        <div className="relative flex w-[18px] flex-col items-center justify-between border-l border-[#e2e2e2] bg-[#f0f0f0] py-[5px] pr-[2px] text-[#444]">
          <Triangle dir="up" />
          <Triangle dir="down" />
          <div className="absolute top-[314px] left-px flex h-[15px] w-[14px] flex-col items-center justify-center gap-[2px] rounded-[2px] border border-[#8f8f8f] bg-[#e2e2e4]">
            <div className="h-px w-[7px] bg-[#555]" /><div className="h-px w-[7px] bg-[#555]" /><div className="h-px w-[7px] bg-[#555]" />
          </div>
          <div className="absolute top-[628px] left-0 h-[5px] w-full border-y-2 border-[#e6bb00] bg-[#f3e39b]" />
          <div className="absolute top-[686px] left-0 h-[3px] w-full bg-[#e6b800]" />
        </div>
      </div>
    </div>
  );
}

function ChromeWindow() {
  return (
    <div className="absolute top-[17px] left-[12px] flex h-[951px] w-[1122px] flex-col rounded-t-[7px] rounded-b-[5px] border border-[#27364f] bg-[#b5cbea] bg-[linear-gradient(to_bottom,#2f5796_0px,#6488bd_6px,#9db5dc_16px,#b7cbe8_32px,#b9cfee_60px)] px-[6px] shadow-[0_1px_9px_2px_rgba(0,0,0,.55)]">
      {/* glass tinted by what lies behind the title bar */}
      <div className="absolute top-0 left-[2px] h-[18px] w-[1114px] overflow-hidden rounded-t-[6px]">
        <div className="absolute top-[-3px] left-[80px] h-[14px] w-[246px] bg-[#c4cfdf]/70 blur-[4px]" />
        <div className="absolute top-[-2px] left-[900px] h-[12px] w-[230px] bg-[#1c3a7a]/50 blur-[4px]" />
      </div>
      <ChromeHeader />
      <Banner />
      <SearchRow />
      <div className={`flex h-[746px] shrink-0 ${ARIAL}`}>
        <LeftPanel />
        <div className="w-[5px] shrink-0 border-x border-[#a0a0a0] bg-[#d2d2d2]" />
        <RightPanel />
      </div>
      <FindBar />
    </div>
  );
}

/* ---------- taskbar ---------- */

const TASKS: { name: string; framed?: boolean; lit?: boolean; stacked?: boolean; icon: ReactNode }[] = [
  {
    name: "explorer", framed: true, lit: true,
    icon: <><path d="M1 3h9l2 3h18v21H1z" fill="#f6d981" stroke="#b8933c" /><path d="M3 3h5v3M13 5h6M22 6h5" stroke="#4a9a45" strokeWidth="2" /><path d="M2 9h29v18H2z" fill="#fae9a8" /><path d="M7 30V19q0-1 1-1h18q1 0 1 1v11h-5v-7H12v7z" fill="#93d3e6" stroke="#4c9ab8" /></>,
  },
  {
    name: "eclipse",
    icon: <><circle cx="16" cy="16" r="15" fill="#1f1852" /><path d="M16 1A15 15 0 0 0 8 28Q2 12 20 1.500z" fill="#8b70b0" /><path d="M2 13h28M1 16.500h30M2 20h28" stroke="#cfd5f2" strokeWidth="1.500" /></>,
  },
  {
    name: "chrome", framed: true, lit: true, stacked: true,
    icon: <><circle cx="16" cy="16" r="14.500" fill="#34a146" /><path d="M3.400 8.700A14.500 14.500 0 0 1 28.600 8.700L16 9.500z" fill="#dc3a2b" /><path d="M3.400 8.700L10 19 16 9z" fill="#dc3a2b" /><path d="M28.600 8.700A14.500 14.500 0 0 1 15 30.500L22.500 19 16 8.800z" fill="#f9cd2e" /><circle cx="16" cy="16" r="7" fill="#f3f3f3" /><circle cx="16" cy="16" r="5.500" fill="#4a86d8" /></>,
  },
  {
    name: "media player",
    icon: <><path d="M9 5h18v22H9z" fill="#8cc6e6" stroke="#4f95c4" /><path d="M3 6h19v22H3z" fill="#b9e0f3" stroke="#5ba3cc" /><circle cx="12" cy="17" r="8.500" fill="#ee7a1d" stroke="#fff" /><path d="M9.500 12l8 5-8 5z" fill="#fff" /></>,
  },
  {
    name: "photo gallery",
    icon: <><path d="M1 14Q1 30 20 30Q7 26 5 14z" fill="#edc36b" /><path d="M4 5h11v12H4z" fill="#b8d981" stroke="#fff" strokeWidth="1.500" /><path d="M13 3h16v12H13z" fill="#8cc4e8" stroke="#fff" strokeWidth="1.500" /><path d="M9 13h20v11H9z" fill="#cfe3b8" stroke="#fff" strokeWidth="1.500" /><path d="M18 5l1.500 5 4.500-2-1.500 4.500 3.500 1-3.500 2.500 2 5-4.500-2.500-1 4-3-4-4 1 2-3.500-3-2.500 4-1-1-4.500 3 2z" fill="#dd4a12" /><path d="M13 3v12h16" stroke="#fff" strokeWidth="1.500" fill="none" /></>,
  },
  {
    name: "firefox",
    icon: <><circle cx="17" cy="14.500" r="13" fill="#23539f" /><circle cx="18" cy="9" r="6.500" fill="#7db8e6" /><path d="M4 4Q1 9 1 16q0 14 15 15 15 0 15-16 0-7-4-10 1 5 0 9-1 10-10 10-7-1-8-5 4 2 7-2-5-1-6-4 2-2 5-2-1-4-5-5-1-2 1-4-4 0-7 2z" fill="#d95f12" /><path d="M27 5q4 4 4 11 0 12-12 14.500 10-5 9-15z" fill="#f5bd3a" /></>,
  },
  {
    name: "opera",
    icon: <><path fillRule="evenodd" d="M16 1C6 1 1.500 8 1.500 16S6 31 16 31 30.500 24 30.500 16 26 1 16 1zM16 4.500Q21 5 21 16T16 27.500 11 16 16 4.500z" fill="#cf1420" /><path d="M4 10Q7 2 16 2 10 3 9 12z" fill="#f0686e" /></>,
  },
  {
    name: "skype", framed: true,
    icon: <><circle cx="9" cy="9" r="8" fill="#1aaeea" /><circle cx="15.500" cy="15" r="12.500" fill="#1aaeea" /><circle cx="21" cy="21" r="8" fill="#1aaeea" /><path d="M21 10.500Q15 6 11 9.500q-2 4 3 5.500 8 1.500 7 5-2 5-11 0" stroke="#fff" strokeWidth="3.400" fill="none" /><circle cx="26.500" cy="26" r="5" fill="#f6971e" stroke="#b85e0a" /><text x="24.500" y="29" fontSize="8" className="font-['Liberation_Sans']" fill="#000">1</text></>,
  },
  {
    name: "git", framed: true,
    icon: <><path d="M15.500 0v12M8 6h15" stroke="#3fb548" strokeWidth="3.600" /><path d="M8 14h15" stroke="#c22530" strokeWidth="3.400" /><text x="23" y="32" transform="rotate(-90 23 32)" fontSize="20" fontWeight="700" textLength="15" lengthAdjust="spacingAndGlyphs" className="font-['Liberation_Sans']" fill="#666">GI</text></>,
  },
  {
    name: "outlook", framed: true,
    icon: <><path d="M3 1h23v8H3z" fill="#fdf2d6" stroke="#eba43a" strokeWidth="2" /><path d="M0.500 8V3l4-2v26h-4z" fill="#fff" stroke="#eba43a" strokeWidth="1.500" /><path d="M5 10h25v16H5z" fill="#fff" stroke="#e8c98a" /><path d="M5 10l9 8M30 10l-9 8" stroke="#e8a33a" strokeWidth="2" /><circle cx="17" cy="19.500" r="9.500" fill="#e89a25" /><circle cx="17" cy="19.500" r="7.500" fill="#f7d36b" /><path d="M13 17.500l4.500 4 4-3" stroke="#a8650f" strokeWidth="2" fill="none" /></>,
  },
  {
    name: "notepad", framed: true,
    icon: <><path d="M1 1h22v29H1z" fill="#f4f5f0" stroke="#888" /><path d="M1.500 18h21v12h-21z" fill="#6fbf28" /><path d="M1.500 13h21v5h-21z" fill="#c3e59c" /><path d="M2 1.500h20" stroke="#555" strokeWidth="2" strokeDasharray="1.500 1.500" /><path d="M6.500 20v-8h3v8M11.500 15.500h4M13.500 13.500v4M16.500 15.500h4M18.500 13.500v4" stroke="#222" strokeWidth="1.300" fill="none" /><path d="M27 3L17 22l-1 4.500 3.500-3L30 5z" fill="#f0a52a" stroke="#8a5a14" strokeWidth=".8" /><path d="M27 3l1.500-3 3 1.500L30 5z" fill="#b8333a" /></>,
  },
  {
    name: "terminal", framed: true,
    icon: <><path d="M1.500 4h29v24h-29z" fill="#0a0a0a" stroke="#999" /><path d="M2 4.500h28" stroke="#ddd" strokeWidth="1.500" /><text x="4" y="15" fontSize="8" textLength="13" className="font-['Liberation_Mono']" fill="#fff">C:\</text><path d="M19 15h7" stroke="#fff" /></>,
  },
  {
    name: "remote desktop", framed: true,
    icon: <><path d="M3 3l22-2 2 19-19 3z" fill="#d6dae2" stroke="#999" /><path d="M5 5l18-2 2 15-16 2z" fill="#1433c4" /><path d="M14 4l9-1 2 15-5 .5z" fill="#5a7ff2" /><path d="M10 24l8-2 5 6-12 2z" fill="#d4d8dc" /><circle cx="24" cy="24" r="7" fill="#e9ebe8" stroke="#888" /><path d="M20.500 21l3 3-3 3M28 19.500l-3 3 3 3" stroke="#2c9a3a" strokeWidth="1.800" fill="none" /></>,
  },
  {
    name: "java ee", framed: true, lit: true,
    icon: <><rect x="0" y="0" width="32" height="32" fill="#46305f" /><circle cx="16" cy="16" r="12" fill="#1e1a22" stroke="#ddd" strokeWidth="2" /><circle cx="16" cy="16" r="14" fill="none" stroke="#ddd" strokeWidth="3" strokeDasharray="4 4.800" /><path d="M0 8h32v9H0zM8 17h16v8H8z" fill="#2a1a22" opacity=".9" /><text x="16" y="15.500" fontSize="9.500" textAnchor="middle" textLength="31" lengthAdjust="spacingAndGlyphs" className="font-['Liberation_Sans']" fill="#ff9020">Java EE</text><text x="16" y="24.500" fontSize="10" textAnchor="middle" textLength="14" className="font-['Liberation_Sans']" fill="#ff9020">IDE</text></>,
  },
  {
    name: "internet explorer", framed: true,
    icon: <><path d="M26.500 22Q22 28 16 27.500 7 26 7 17T16.500 7Q26.500 7 27 17H10" stroke="#49b6ee" strokeWidth="5.500" fill="none" /><path d="M3 30Q-2 26 5 15 15 2 24 1q6 0 4 8 .5-6-5-5Q14 7 8 16 3 24 5 28q2 2 6 0-4 4-8 2z" fill="#f3c430" stroke="#c9921a" strokeWidth=".5" /></>,
  },
];

function Taskbar() {
  return (
    <div className={`flex h-[40px] w-[1280px] items-center border-t border-[#26384f] bg-gradient-to-r from-[#38598d] via-[#4a76b5] via-20% to-[#4a76b5] ${UI}`}>
      <svg width="38" height="38" viewBox="0 0 38 38" className="ml-[7px]">
        <defs><radialGradient id="orb" cx=".5" cy=".95" r=".9"><stop offset="0" stopColor="#5fe3fb" /><stop offset=".45" stopColor="#2474a8" /><stop offset="1" stopColor="#20456f" /></radialGradient></defs>
        <circle cx="19" cy="19" r="17.500" fill="url(#orb)" stroke="#8fb4d0" />
        <path d="M11 11q4-2 8 0l-2 7q-4-2-8 0z" fill="#e8602c" /><path d="M20.500 11.500q4 2 8 0l-2 7q-4 2-8 0z" fill="#93c83d" />
        <path d="M8.500 19.500q4-2 8 0l-2 7q-4-2-8 0z" fill="#4ba3dc" /><path d="M18 20q4 2 8 0l-2 7q-4 2-8 0z" fill="#fbcf38" />
        <path d="M3 16Q6 3 19 2.500 32 3 35 16 19 8 3 16z" fill="#fff" opacity=".22" />
      </svg>
      <div className="ml-[14px] flex gap-[3px]">
        {TASKS.map((t) => (
          <div key={t.name} title={t.name} className="flex h-[38px] w-[59px]">
            <div
              className={`flex h-full flex-1 items-center justify-center rounded-[3px] border ${t.framed ? "border-[#2c4a78] shadow-[inset_0_0_0_1px_rgba(255,255,255,.4)]" : "border-transparent"} ${t.lit ? "bg-gradient-to-br from-[#b9cbe3] to-[#5a80b6]" : t.framed ? "bg-gradient-to-br from-[#86a5d0] to-[#5079b4]" : ""}`}
            >
              <svg width="32" height="32" viewBox="0 0 32 32">{t.icon}</svg>
            </div>
            {t.stacked && <div className="h-full w-[5px] rounded-r-[3px] border border-l-0 border-[#2c4a78] bg-[#7f9dc8]" />}
          </div>
        ))}
      </div>
      <div className="flex h-full flex-1 items-center bg-gradient-to-r from-[#4a76b5] via-[#3a5c90] via-10% to-[#3f6297] text-white">
        <Fit w={15} className="mb-[5px] ml-[44px] text-[12px]">SV</Fit>
        <Triangle dir="up" className="ml-[15px]" />
        <svg width="17" height="16" viewBox="0 0 17 16" className="mt-px ml-[12px]"><path d="M1 5h3l4-4v14l-4-4H1z" fill="#fff" /><path d="M10 4q3 3 0 7" stroke="#fff" fill="none" /><circle cx="12" cy="11" r="4" fill="#fff" stroke="#d32020" strokeWidth="2" /><path d="M9.500 8.500l5 5" stroke="#d32020" strokeWidth="1.600" /></svg>
        <svg width="16" height="16" viewBox="0 0 16 16" className="mt-px ml-[8px]"><path d="M1.500 1v15" stroke="#fff" strokeWidth="1.600" /><path d="M3 2q4-2 6 0t5 0v7H3z" fill="#fff" /><circle cx="10.500" cy="11" r="4.800" fill="#d32020" /><path d="M8.500 9l4 4M12.500 9l-4 4" stroke="#fff" strokeWidth="1.500" /></svg>
        <svg width="15" height="16" viewBox="0 0 15 16" className="mt-px ml-[8px]"><path d="M1.500 3.500h6.500v11h-6.500zM3.500 1.500h3v2" fill="none" stroke="#fff" strokeWidth="1.400" /><path d="M6.500 5.500h7v3.500q0 2-2.500 2.500V13.500h-2v-2Q6.500 11 6.500 9z" fill="#fff" /><path d="M8.500 2v3M11.500 2v3" stroke="#fff" strokeWidth="1.300" /></svg>
        <svg width="16" height="14" viewBox="0 0 16 14" className="mt-px ml-[10px]"><path d="M1.500 14v-3M4.500 14V9M7.500 14V7M10.500 14V4M13.500 14V1" stroke="#fff" strokeWidth="2" /></svg>
        <div className="ml-[17px] flex w-[59px] flex-col items-center text-[12px] leading-[17px]">
          <Fit w={28}>09:50</Fit>
          <Fit w={58}>2012-04-20</Fit>
        </div>
        <div className="ml-auto h-full w-[22px] border border-[#8aa3c8] bg-gradient-to-br from-[#5d7cab] via-[#1d3f74] to-[#35588f]" />
      </div>
    </div>
  );
}

export default function App() {
  return (
    <div className="h-[1200px] w-[1920px] overflow-hidden bg-black">
      <div className="relative h-[1024px] w-[1280px] overflow-hidden">
        <FirefoxWindow />
        <RemoteBar />
        <ChromeWindow />
        <div className="relative"><Taskbar /></div>
      </div>
    </div>
  );
}
